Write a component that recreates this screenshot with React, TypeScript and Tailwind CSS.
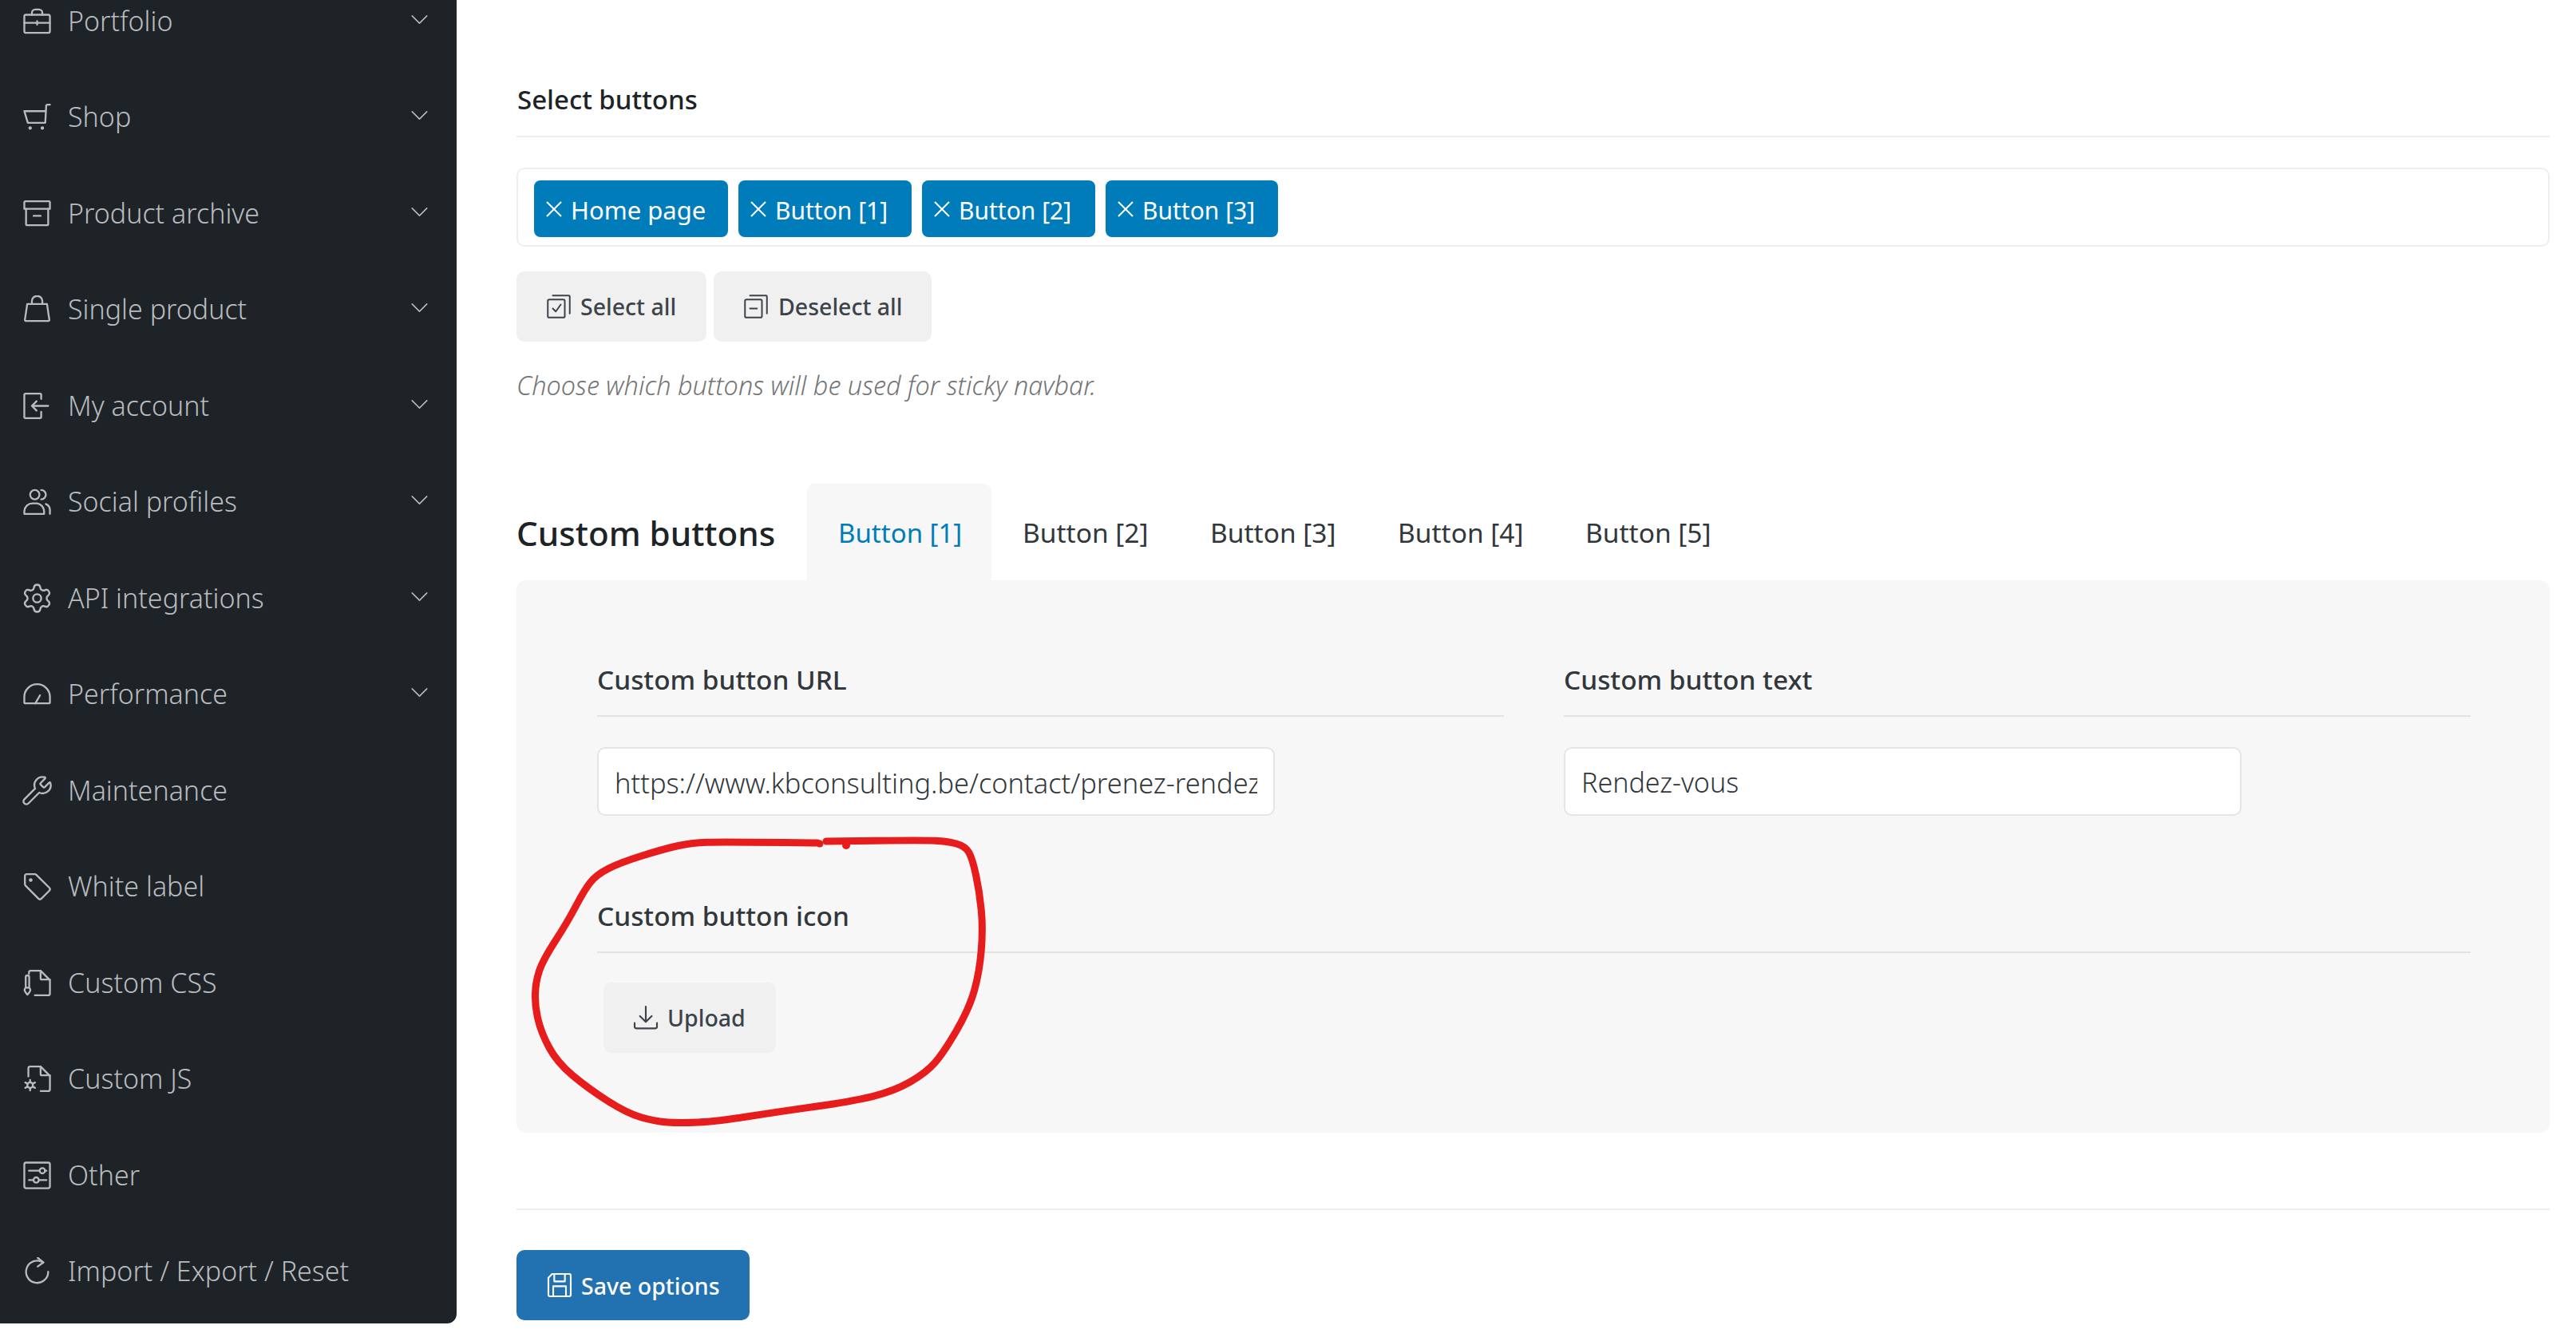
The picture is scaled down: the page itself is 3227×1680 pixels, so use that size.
import React from "react";
import { ChevronDown, Settings, Wrench } from "lucide-react";

const Ic = ({ children, size = 35, className = "" }: { children: React.ReactNode; size?: number; className?: string }) => (
  <svg
    viewBox="0 0 24 24"
    width={size}
    height={size}
    fill="none"
    stroke="currentColor"
    strokeWidth={1.6}
    strokeLinecap="round"
    strokeLinejoin="round"
    className={`shrink-0 ${className}`}
  >
    {children}
  </svg>
);

const menu: { label: string; chevron: boolean; icon: React.ReactNode }[] = [
  {
    label: "Portfolio",
    chevron: true,
    icon: (
      <Ic>
        <rect x="1" y="6.5" width="22" height="15.5" rx="1.5" />
        <path d="M7.5 6.5V5a3 3 0 0 1 3-3h3a3 3 0 0 1 3 3v1.5M1 13.5h22M12 12v3" />
      </Ic>
    ),
  },
  {
    label: "Shop",
    chevron: true,
    icon: (
      <Ic>
        <path d="M23 1.5h-2.2a1 1 0 0 0-1 1L19 17H4L1 7h18.6" />
        <circle cx="6" cy="21.5" r=".7" />
        <circle cx="16.5" cy="21.5" r=".7" />
      </Ic>
    ),
  },
  {
    label: "Product archive",
    chevron: true,
    icon: (
      <Ic>
        <path d="M1 8V2.5a1 1 0 0 1 1-1h20a1 1 0 0 1 1 1V8z" />
        <path d="M2.5 8v13a1 1 0 0 0 1 1h17a1 1 0 0 0 1-1V8M9 14h6" />
      </Ic>
    ),
  },
  {
    label: "Single product",
    chevron: true,
    icon: (
      <Ic>
        <path d="M7.5 7.5V5a4.5 4.5 0 0 1 9 0v2.5" />
        <path d="M3.5 7.5h17l2 13.5a.8.8 0 0 1-.8 1H2.3a.8.8 0 0 1-.8-1z" />
      </Ic>
    ),
  },
  {
    label: "My account",
    chevron: true,
    icon: (
      <Ic>
        <path d="M15.5 6V2.5a1 1 0 0 0-1-1H2a1 1 0 0 0-1 1v19a1 1 0 0 0 1 1h12.5a1 1 0 0 0 1-1V17" />
        <path d="M21.5 12H7.5M11.5 8l-4 4 4 4" />
      </Ic>
    ),
  },
  {
    label: "Social profiles",
    chevron: true,
    icon: (
      <Ic>
        <circle cx="10" cy="6" r="4" />
        <path d="M1 22.5V20a7 7 0 0 1 7-6.5h4a7 7 0 0 1 6 6.5v2.5zM15.5 2a4 4 0 0 1 0 8M19.5 14a6 6 0 0 1 3.5 6v2.5" />
      </Ic>
    ),
  },
  {
    label: "API integrations",
    chevron: true,
    icon: <Settings size={41} strokeWidth={1.4} className="shrink-0 -mx-[3px]" />,
  },
  {
    label: "Performance",
    chevron: true,
    icon: (
      <Ic>
        <path d="M2 20h20a1 1 0 0 0 1-1v-4.5a11 11 0 0 0-22 0V19a1 1 0 0 0 1 1z" />
        <path d="M10.5 20l4-7" />
      </Ic>
    ),
  },
  {
    label: "Maintenance",
    chevron: false,
    icon: <Wrench size={41} strokeWidth={1.4} className="shrink-0 -mx-[3px]" />,
  },
  {
    label: "White label",
    chevron: false,
    icon: (
      <Ic>
        <path d="M1.5 3v7a2 2 0 0 0 .6 1.4L13 22.4a2 2 0 0 0 2.8 0l6.6-6.6a2 2 0 0 0 0-2.8L11.4 2.1A2 2 0 0 0 10 1.5H3A1.5 1.5 0 0 0 1.5 3z" />
        <circle cx="6.5" cy="6.5" r=".8" />
      </Ic>
    ),
  },
  {
    label: "Custom CSS",
    chevron: false,
    icon: (
      <Ic>
        <path d="M5 4V3a1.5 1.5 0 0 1 1.5-1.5H15l8 8v11.5a1.5 1.5 0 0 1-1.5 1.5H10" />
        <path d="M15 1.5v6.5a1 1 0 0 0 1 1h7" />
        <path d="M2.2 7a1.5 1.5 0 0 1 3 0v9h-3zM2.2 16a2.6 2.6 0 0 0-.7 3c.4 1.2 1.4 2.2 2.2 3 .8-.8 1.8-1.8 2.2-3a2.6 2.6 0 0 0-.7-3" />
      </Ic>
    ),
  },
  {
    label: "Custom JS",
    chevron: false,
    icon: (
      <Ic>
        <path d="M4.5 10V3A1.5 1.5 0 0 1 6 1.5h9l8 8v11.5a1.5 1.5 0 0 1-1.5 1.5H15" />
        <path d="M15 1.5v6.5a1 1 0 0 0 1 1h7" />
        <circle cx="6" cy="17.5" r="2.4" />
        <path d="M6 13v2M6 20v2M1.8 15.2l2 1M8.2 18.8l2 1M1.8 19.8l2-1M8.2 16.2l2-1" />
      </Ic>
    ),
  },
  {
    label: "Other",
    chevron: false,
    icon: (
      <Ic>
        <rect x="1" y="1" width="22" height="22" rx="1.5" />
        <path d="M5 8h9M20 8h-1.5M5 16h4M13.5 16H20" />
        <circle cx="16.5" cy="8" r="2.3" />
        <circle cx="11.2" cy="16" r="2.3" />
      </Ic>
    ),
  },
  {
    label: "Import / Export / Reset",
    chevron: false,
    icon: (
      <Ic>
        <path d="M17 4.5a9.5 9.5 0 1 0 4.5 8" />
        <path d="M12.5 .5L17.5 4.5 12.5 8" />
      </Ic>
    ),
  },
];

const tabs = ["Button [2]", "Button [3]", "Button [4]", "Button [5]"];
const chips = [
  { text: "Home page", cls: "w-[243px] text-[31px]" },
  { text: "Button [1]", cls: "w-[217px] text-[30px]" },
  { text: "Button [2]", cls: "w-[217px] text-[30px]" },
  { text: "Button [3]", cls: "w-[216px] text-[30px]" },
];

// hand drawn ring, in page pixels
const ring: [number, number][] = [
  [1024, 1056], [906, 1054.5], [865, 1056], [830, 1064], [776, 1081], [747, 1096], [732, 1115],
  [711, 1155], [680, 1203], [671, 1230], [670, 1260], [678, 1294], [698, 1331], [736, 1363],
  [785, 1394.5], [821, 1405], [852, 1407], [897, 1405], [977, 1392.5], [1066, 1380], [1120, 1367],
  [1160, 1344], [1182, 1319], [1214, 1264], [1227, 1218], [1231.5, 1163], [1227, 1117], [1218, 1075],
  [1209, 1060], [1187, 1054], [1156, 1052.5], [1035, 1054],
];

const ringPath = () => {
  let d = `M${ring[0][0]} ${ring[0][1]}`;
  for (let i = 1; i < ring.length - 1; i++) {
    const mx = (ring[i][0] + ring[i + 1][0]) / 2;
    const my = (ring[i][1] + ring[i + 1][1]) / 2;
    d += ` Q${ring[i][0]} ${ring[i][1]} ${mx} ${my}`;
  }
  const last = ring[ring.length - 1];
  return `${d} L${last[0]} ${last[1]}`;
};

const FieldLabel = ({ text }: { text: string }) => (
  <div className="text-[33.4px] leading-[50px] font-medium text-[#32373c] pb-[20px] border-b-2 border-[#e2e2e2]">{text}</div>
);

const GreyButton = ({ icon, text, className = "" }: { icon: React.ReactNode; text: string; className?: string }) => (
  <div className={`h-[88px] flex items-center rounded-[10px] bg-[#f0f0f0] text-[#3c434a] text-[28.5px] font-medium ${className}`}>
    {icon}
    <span>{text}</span>
  </div>
);

const App = () => {
  return (
    <div className="relative w-[3227px] h-[1680px] overflow-hidden bg-white flex font-['Noto_Sans',sans-serif]">
      <aside className="w-[572px] h-[1658px] shrink-0 bg-[#1e2328] rounded-br-[12px] overflow-hidden">
        <nav className="-mt-[34px] pl-[29px] pr-[36px] text-[#b9bcbf] text-[34px]">
          {menu.map((item) => (
            <div key={item.label} className="h-[120.5px] flex items-center">
              {item.icon}
              <span className="ml-[21px] font-light flex-1">{item.label}</span>
              {item.chevron && <ChevronDown size={37} strokeWidth={1} className="-mt-[4px] -mr-[8px]" />}
            </div>
          ))}
        </nav>
      </aside>

      <main className="ml-[75px] w-[2547px] shrink-0 flex flex-col">
        <div className="pt-[100px] pb-[20px] pl-[1px] leading-[50px] text-[33px] font-medium text-[#1d2327] border-b-2 border-[#eeeeee]">
          Select buttons
        </div>

        <div className="mt-[38px] h-[99px] rounded-[10px] border-2 border-[#eeeeee] pl-[20px] pt-[14px] flex items-start gap-[13px]">
          {chips.map((c) => (
            <div key={c.text} className={`h-[71px] rounded-[8px] bg-[#007cba] text-white pl-[15px] flex items-center ${c.cls}`}>
              <svg viewBox="0 0 20 20" width="20" height="20" stroke="currentColor" strokeWidth="2" className="mr-[11px]">
                <path d="M1 1l18 18M19 1L1 19" />
              </svg>
              <span className="pt-[3px]">{c.text}</span>
            </div>
          ))}
        </div>

        <div className="mt-[31px] flex gap-[9px]">
          <GreyButton
            className="w-[238px] pl-[38px]"
            text="Select all"
            icon={
              <Ic size={30} className="mr-[12px]">
                <rect x="1" y="5" width="17" height="18" rx="1.5" />
                <path d="M6 1h16a1 1 0 0 1 1 1v17M6 14l3 3 5-7" />
              </Ic>
            }
          />
          <GreyButton
            className="w-[273px] pl-[38px]"
            text="Deselect all"
            icon={
              <Ic size={30} className="mr-[13px]">
                <rect x="1" y="5" width="17" height="18" rx="1.5" />
                <path d="M6 1h16a1 1 0 0 1 1 1v17M6 14h7" />
              </Ic>
            }
          />
        </div>

        <p className="mt-[34px] text-[32.4px] leading-[40px] italic font-light text-[#757575]">
          Choose which buttons will be used for sticky navbar.
        </p>

        <div className="mt-[104px] h-[121px] flex items-center">
          <h2 className="w-[364px] shrink-0 pt-[2px] text-[42.2px] font-medium text-[#1d2327]">Custom buttons</h2>
          <div className="h-full w-[231px] pl-[39px] pt-[2px] rounded-t-[10px] bg-[#f7f7f7] text-[#007cba] text-[33px] flex items-center">Button [1]</div>
          {tabs.map((t) => (
            <div key={t} className="h-full w-[235px] pl-[39px] pt-[2px] text-[#32373c] text-[33.5px] flex items-center">
              {t}
            </div>
          ))}
        </div>

        <section className="h-[692px] rounded-[12px] bg-[#f7f7f7] pt-[99px] pl-[101px] pr-[99px]">
          <div className="grid grid-cols-2 gap-x-[75px]">
            <div>
              <FieldLabel text="Custom button URL" />
              <input
                readOnly
                value="https://www.kbconsulting.be/contact/prenez-rendez-vous"
                className="mt-[38px] w-[849px] h-[86px] px-[20px] pt-[2px] bg-white border-2 border-[#e5e5e5] rounded-[10px] text-[34.4px] font-light text-[#32373c] outline-none"
              />
            </div>
            <div>
              <FieldLabel text="Custom button text" />
              <input
                readOnly
                value="Rendez-vous"
                className="mt-[38px] w-[849px] h-[86px] px-[20px] pt-[2px] bg-white border-2 border-[#e5e5e5] rounded-[10px] text-[34px] font-light text-[#32373c] outline-none"
              />
            </div>
          </div>
          <div className="mt-[100px]">
            <FieldLabel text="Custom button icon" />
            <GreyButton
              className="mt-[37px] ml-[8px] w-[216px] pl-[37px]"
              text="Upload"
              icon={
                <Ic size={32} className="mr-[11px]">
                  <path d="M12 1.5v14M6.5 10.5l5.5 5.5 5.5-5.5M1.5 17v3.5a1.5 1.5 0 0 0 1.5 1.5h18a1.5 1.5 0 0 0 1.5-1.5V17" />
                </Ic>
              }
            />
          </div>
        </section>

        <div className="mt-[95px] border-t-2 border-[#eeeeee]" />

        <div className="mt-[50px] w-[292px] h-[88px] pl-[38px] rounded-[10px] bg-[#2271b1] text-white text-[28.5px] font-medium flex items-center">
          <Ic size={32} className="mr-[11px]">
            <path d="M5 1.5h16a1.5 1.5 0 0 1 1.5 1.5v18a1.5 1.5 0 0 1-1.5 1.5H3A1.5 1.5 0 0 1 1.5 21V5z" />
            <path d="M7 1.5v7h10v-7M6 22.5V13h12v9.5" />
          </Ic>
          <span className="pt-[2px]">Save options</span>
        </div>
      </main>

      {/* red marker ring drawn over the upload field */}
      <svg className="absolute left-0 top-0 pointer-events-none" width="3227" height="1680" fill="none">
        <path d={ringPath()} stroke="#e71c1c" strokeWidth="9" strokeLinecap="round" strokeLinejoin="round" />
        <circle cx="1060" cy="1059" r="5" fill="#e71c1c" />
        <circle cx="1027" cy="1057" r="4.5" fill="#e71c1c" />
      </svg>
    </div>
  );
};

export default App;
